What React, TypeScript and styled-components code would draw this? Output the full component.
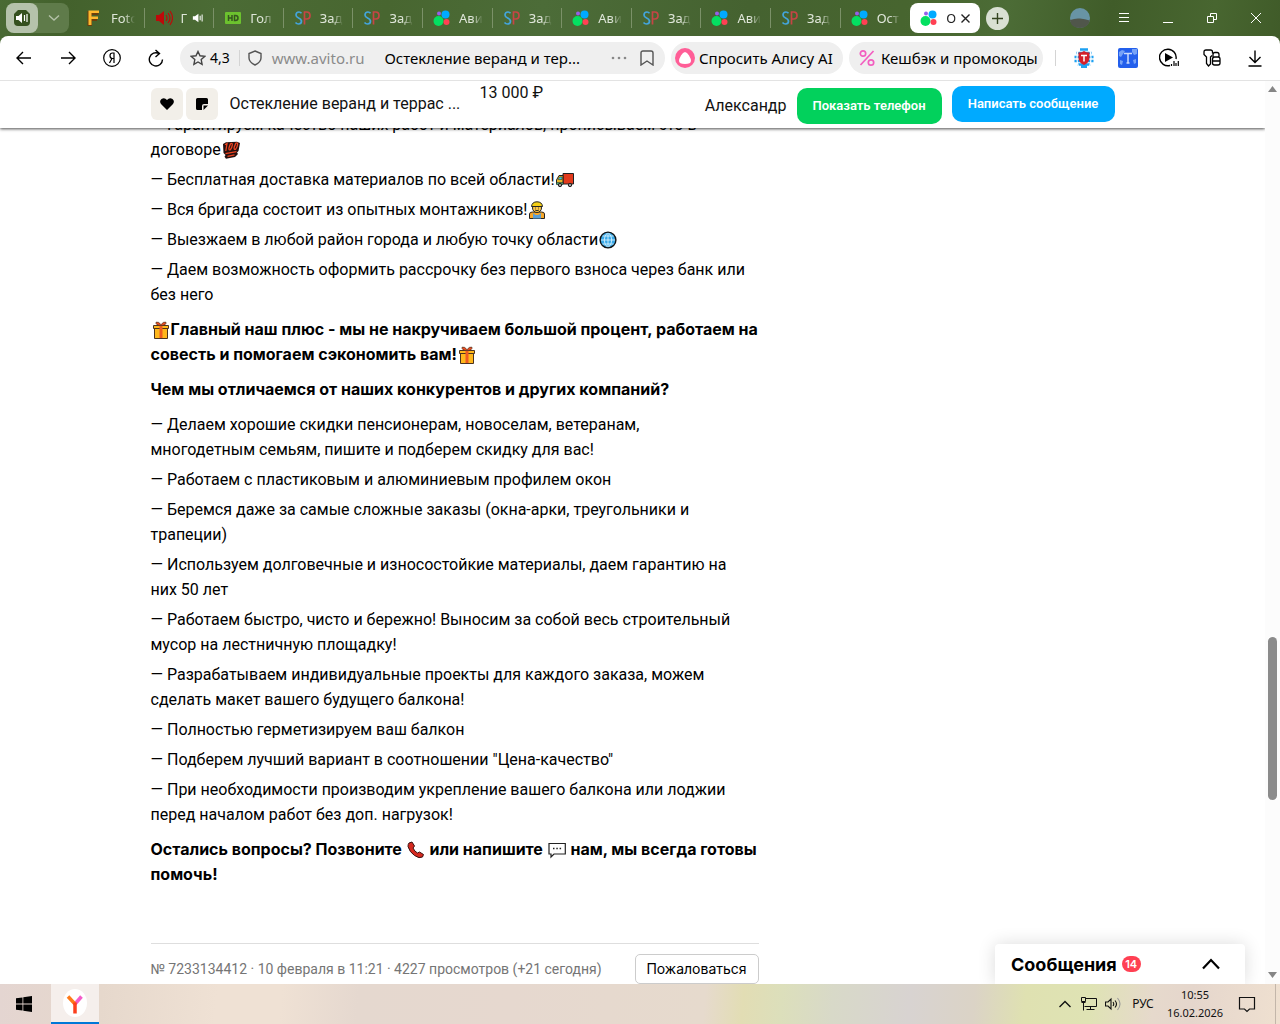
import React from 'react';
import styled, { createGlobalStyle } from 'styled-components';

const GlobalStyle = createGlobalStyle`
  * { box-sizing: border-box; }
  body { margin: 0; background: #fff; color: #000; font-family: Inter, "Noto Sans", sans-serif; overflow: hidden; }
  button, input { font: inherit; color: inherit; }
  svg { display: block; flex: none; }
`;

const Shell = styled.div`
  display: flex;
  flex-direction: column;
  height: 100vh;
`;

/* ---------- browser chrome ---------- */

const Chrome = styled.header`
  flex: none;
  font-family: "Noto Sans", sans-serif;
  background: linear-gradient(100deg, #4a6a34 0%, #43612c 5%, #4b6b35 17%, #486630 30%, #4c6c38 42%, #456230 58%, #47652f 70%, #4c6c36 78%, #405c29 86%, #486630 94%, #3f5a28 100%);
`;

const TabStrip = styled.div`
  display: flex;
  height: 36px;
`;

const IconButton = styled.button<{ $w?: number; $h?: number }>`
  display: flex;
  align-items: center;
  justify-content: center;
  flex: none;
  width: ${p => p.$w ?? 44}px;
  height: ${p => p.$h ?? 32}px;
  padding: 0;
  border: 0;
  background: none;
`;

const SoundGroup = styled.div`
  display: flex;
  flex: none;
  width: 63px;
  height: 30px;
  margin: 3px 6px;
  border-radius: 8px;
  background: #5f7b4a;
`;

const SoundButton = styled(IconButton)`
  border-radius: 8px;
  background: #b5c2ab;
`;

const Tabs = styled.nav`
  display: flex;
  flex: 1;
  min-width: 0;
`;

const Tab = styled.button<{ $active?: boolean; $last?: boolean }>`
  display: flex;
  align-items: center;
  flex: 1 1 0;
  min-width: 0;
  height: 30px;
  margin: 3px 0;
  padding: 0 10px;
  border: 0;
  border-radius: ${p => (p.$active ? '8px' : '0')};
  background: ${p => (p.$active ? '#fff' : 'none')};
  color: ${p => (p.$active ? '#222' : '#dfe6d9')};
  font-size: 13px;
  line-height: 20px;
  background-image: ${p => (p.$active || p.$last ? 'none' : 'linear-gradient(#7b9168, #7b9168)')};
  background-size: 1px 20px;
  background-position: right center;
  background-repeat: no-repeat;
`;

const TabTitle = styled.span`
  flex: 1;
  min-width: 0;
  margin-left: 8px;
  overflow: hidden;
  white-space: nowrap;
  text-align: left;
  mask-image: linear-gradient(90deg, #000 55%, transparent);
`;

const WindowControls = styled.div`
  display: flex;
  align-items: center;
  justify-content: flex-end;
  flex: none;
  width: 300px;
  padding-right: 2px;
`;

const NewTab = styled(IconButton)`
  margin: 0 auto 0 6px;
  border-radius: 50%;
  background: #d9e0d3;
`;

const Toolbar = styled.div`
  display: flex;
  align-items: center;
  height: 45px;
  padding-left: 2px;
  border-bottom: 1px solid #e3e3e3;
  border-radius: 8px 8px 0 0;
  background: #fff;
`;

const Pill = styled.div`
  display: flex;
  align-items: center;
  height: 32px;
  border-radius: 16px;
  background: #efefef;
  font-size: 15px;
  line-height: 24px;
  white-space: nowrap;
`;

const Omnibox = styled(Pill)`
  flex: 1;
  min-width: 0;
  margin-left: 2px;
  padding: 0 6px 0 10px;
`;

const Rating = styled.span`
  margin: 0 9px 0 4px;
  font-size: 14px;
`;

const Rule = styled.span`
  flex: none;
  width: 1px;
  height: 16px;
  background: #d4d4d4;
`;

const Shield = styled.span`
  margin: 0 10px 0 8px;
`;

const Host = styled.span`
  color: #8b8b8b;
`;

const PageName = styled.span`
  flex: 1;
  min-width: 0;
  margin-left: 20px;
  overflow: hidden;
  text-overflow: ellipsis;
`;

const PillButton = styled(Pill).attrs({ as: 'button' })<{ $w: number }>`
  flex: none;
  width: ${p => p.$w}px;
  margin-left: 6px;
  padding: 0 4px;
  gap: 4px;
  border: 0;
`;

const Extensions = styled.div`
  display: flex;
  align-items: center;
  flex: none;
  margin-left: 12px;
`;

/* ---------- page ---------- */

const Viewport = styled.div`
  display: flex;
  flex: 1;
  min-height: 0;
`;

const Page = styled.div`
  position: relative;
  display: flex;
  flex-direction: column;
  flex: 1;
  min-width: 0;
  overflow: hidden;
  font-family: Roboto, "Noto Sans", sans-serif;
`;

const StickyBar = styled.div`
  position: relative;
  z-index: 1;
  flex: none;
  height: 47px;
  padding: 5px 20px 2px;
  background: #fff;
  box-shadow: 0 1px 3px rgba(0, 0, 0, 0.7);
`;

const Container = styled.div`
  width: 100%;
  max-width: 964px;
  margin: 0 auto;
`;

const BarRow = styled(Container)`
  display: flex;
  align-items: center;
  height: 40px;
  font-size: 16px;
  line-height: 24px;
  white-space: nowrap;
  color: #111;
`;

const BarItem = styled.div`
  display: flex;
  align-items: center;
  align-self: flex-start;
  height: 36px;
  gap: 3px;
`;

const Soft = styled(IconButton)`
  border-radius: 6px;
  background: #f2efe9;
`;

const BarTitle = styled.span`
  width: 238px;
  margin: 0 12px 0 9px;
`;

const Price = styled.span`
  flex: 1;
  align-self: flex-start;
  line-height: 14px;
`;

const Action = styled.button<{ $color: string; $w: number; $top?: boolean }>`
  flex: none;
  align-self: ${p => (p.$top ? 'flex-start' : 'center')};
  width: ${p => p.$w}px;
  height: 36px;
  margin-left: 10px;
  padding: 0;
  border: 0;
  border-radius: 10px;
  background: ${p => p.$color};
  color: #fff;
  font-size: 13px;
  font-weight: 600;
`;

const Scroll = styled.main`
  flex: 1;
  min-height: 0;
  padding: 0 20px;
  overflow: hidden;
`;

const Column = styled(Container)`
  margin-top: -16px;
`;

const Description = styled.article`
  display: flex;
  flex-direction: column;
  gap: 10px;
  width: 608px;
  padding-bottom: 56px;
  border-bottom: 1px solid #dedede;
  font-size: 16px;
  line-height: 25px;
  white-space: nowrap;
`;

const List = styled.ul`
  display: flex;
  flex-direction: column;
  gap: 5px;
  margin: 0;
  padding: 0;
  list-style: none;
`;

const Strong = styled.p`
  margin: 0;
  font-family: Inter, "Noto Sans", sans-serif;
  font-weight: 700;
`;

const Emoji = styled.svg.attrs({ viewBox: '0 0 18 18', width: 18, height: 18 })`
  display: inline-block;
  margin: 0 1px;
  vertical-align: -4px;
`;

const Meta = styled.footer`
  display: flex;
  align-items: center;
  justify-content: space-between;
  width: 608px;
  padding-top: 10px;
  color: #757575;
  font-size: 14px;
  line-height: 20px;
  white-space: nowrap;
`;

const Report = styled.button`
  width: 124px;
  height: 30px;
  padding: 0;
  border: 1px solid #ccc;
  border-radius: 5px;
  background: #fff;
  color: #000;
  font-family: Inter, "Noto Sans", sans-serif;
`;

const Messenger = styled.button`
  position: absolute;
  right: 20px;
  bottom: 0;
  display: flex;
  align-items: center;
  width: 250px;
  height: 40px;
  padding: 0 24px 0 16px;
  border: 0;
  border-radius: 4px 4px 0 0;
  background: #fff;
  box-shadow: 0 0 18px rgba(0, 0, 0, 0.14);
  font-family: Inter, "Noto Sans", sans-serif;
  font-size: 18px;
  font-weight: 700;
`;

const Badge = styled.span`
  width: 19px;
  height: 16px;
  margin: 0 auto 0 5px;
  border-radius: 8px;
  background: #ff4053;
  color: #fff;
  font-size: 11px;
  font-weight: 600;
  line-height: 16px;
`;

const Scrollbar = styled.div`
  display: flex;
  flex-direction: column;
  align-items: center;
  justify-content: space-between;
  flex: none;
  width: 15px;
  padding: 5px 0 6px;
  background: #fcfcfc;
`;

const Track = styled.div`
  display: flex;
  flex-direction: column;
  flex: 1;
  width: 9px;
`;

const Before = styled.div`
  flex: 545;
`;

const Thumb = styled.div`
  flex: 163;
  border-radius: 5px;
  background: #8b8b8b;
`;

const After = styled.div`
  flex: 172;
`;

/* ---------- taskbar ---------- */

const Taskbar = styled.footer`
  display: flex;
  align-items: center;
  flex: none;
  height: 40px;
  color: #111;
  font-family: "Noto Sans", sans-serif;
  font-size: 12px;
  line-height: 18px;
  background: linear-gradient(95deg, #e4d5d1 0%, #e6d8cc 8%, #efe1d4 17%, #efe1d4 22%, #e5d8cf 28%, #e6d8cf 40%, #e6dacd 55%, #e2ddb4 58%, #dcdfbb 61%, #d8d9c8 65%, #d8d3d1 71%, #dbd3c6 76%, #dfe1b1 80%, #dfe3b4 85%, #e6d9cc 90%, #e5d6cc 93%, #efe0d0 100%);
`;

const TaskButton = styled(IconButton)<{ $active?: boolean }>`
  background: ${p => (p.$active ? '#f5efec' : 'none')};
  border-bottom: ${p => (p.$active ? '2px solid #0078d7' : '0')};
`;

const StartButton = styled(TaskButton)`
  margin-right: 3px;
`;

const Tray = styled.div`
  display: flex;
  align-items: center;
  margin-left: auto;
`;

const Clock = styled.time`
  width: 68px;
  font-size: 11px;
  text-align: center;
`;

const Edge = styled.span`
  width: 1px;
  height: 40px;
  margin: 0 4px 0 10px;
  background: #c3b6aa;
`;

/* ---------- drawings ---------- */

const line = { fill: 'none', stroke: 'currentColor', strokeWidth: 1.4 } as const;

type Site = 'f' | 'sound' | 'hd' | 'sp' | 'avito';

const Favicon = ({ kind }: { kind: Site }) => {
  switch (kind) {
    case 'f':
      return (
        <svg width="18" height="18" viewBox="0 0 18 18">
          <path d="M2.500 2h11v4H7v2.500h5V12H7v5H2.500z" fill="#6b3d0c" />
          <path d="M3.500 1.500H14V4H6.500v3.500H13V10H6.500v6h-3z" fill="#ffb92e" />
        </svg>
      );
    case 'sound':
      return (
        <svg width="18" height="18" viewBox="0 0 18 18">
          <path d="M1 6h3l5-4v14l-5-4H1z" fill="#bd0a0a" />
          <path d="M11 6q2 3 0 6M13 4q4 5 0 10M15 2q5 7 0 14" fill="none" stroke="#bd0a0a" strokeWidth="1.200" />
        </svg>
      );
    case 'hd':
      return (
        <svg width="18" height="18" viewBox="0 0 18 18">
          <rect x="1" y="3" width="16" height="12" rx="1" fill="#6cc22e" />
          <path d="M4.500 6v6M8 6v6M4.500 9H8M10.500 6.500v5h1q2.500 0 2.500-2.500t-2.500-2.500z" fill="none" stroke="#35561f" strokeWidth="1.500" />
        </svg>
      );
    case 'sp':
      return (
        <svg width="18" height="18" viewBox="0 0 18 18" fill="none" strokeWidth="1.700">
          <path d="M7.500 4.200Q6.500 3 5 3 2 3 2 6q0 1.800 2.600 3T7.500 12q0 3-3 3-1.800 0-3-1.500" stroke="#43a5dc" />
          <path d="M10.500 15.500V3h2.200q3.300 0 3.300 3.500T12.700 10h-2" stroke="#c64545" />
        </svg>
      );
    default:
      return (
        <svg width="18" height="18" viewBox="0 0 18 18">
          <circle cx="5.500" cy="12" r="5" fill="#04e061" />
          <circle cx="12.500" cy="5.500" r="4" fill="#00aaff" />
          <circle cx="13.500" cy="13" r="3" fill="#ff4053" />
          <circle cx="6" cy="4.500" r="2" fill="#965eeb" />
        </svg>
      );
  }
};

const Speaker = ({ size = 14 }: { size?: number }) => (
  <svg width={size} height={size} viewBox="0 0 14 14">
    <path d="M1 5h2.500L7.500 2v10L3.500 9H1z" fill="#fff" />
    <path d="M9.500 4.500v5M11.800 3v8" stroke="#fff" strokeWidth="1.200" />
  </svg>
);

const Hundred = () => (
  <Emoji>
    <path d="M1 3l3-1.800L15 .8 18 2l-1.500 8-1.500 1.500 1 1.500-3 3-9 1.800-1.500-2L3.500 14 1.500 12z" fill="#241010" />
    <path d="M3 3.800L5 2.500 3.800 10M8.500 2.800q2-1.300 1.800 1.200T8.300 8.800q-1.800.5-1.300-2zM13.800 2.300q2-1.300 1.800 1.200T13.500 8.300q-1.800.5-1.300-2z" fill="none" stroke="#ee4420" strokeWidth="1.300" />
    <path d="M3.500 12.700l11-2M5.500 15.400l7-1.500" stroke="#ee4420" strokeWidth="1.300" />
  </Emoji>
);

const Truck = () => (
  <Emoji stroke="#222">
    <path d="M7 2.500h10.500v10.500H7z" fill="#e23a1c" />
    <path d="M.5 13V9L3 4.500h4V13z" fill="#e8b62a" />
    <path d="M2.200 8.500L3.500 6H6v2.500z" fill="#3fd0e0" strokeWidth=".5" />
    <path d="M.5 11.500h6.500v2H.5z" fill="#4bb07a" strokeWidth=".5" />
    <circle cx="4" cy="14" r="1.700" fill="#999" />
    <circle cx="14" cy="14" r="1.700" fill="#999" />
  </Emoji>
);

const Worker = () => (
  <Emoji stroke="#222">
    <path d="M1.500 17.500V13q0-2 3-2h9q3 0 3 2v4.500z" fill="#f6a629" />
    <path d="M5 17.500V12l2.500 2h3l2.500-2v5.500z" fill="#5b9fd6" stroke="none" />
    <circle cx="9" cy="7" r="4.500" fill="#fbc546" />
    <path d="M3.500 5.500Q4 .8 9 .8t5.500 4.700z" fill="#f4cf14" />
    <path d="M7 9q2 1.300 4 0M7 7h.8M10.200 7h.8" fill="none" strokeWidth=".9" />
  </Emoji>
);

const Globe = () => (
  <Emoji stroke="#111" fill="none">
    <circle cx="9" cy="9" r="7.900" fill="#3aa9e8" strokeWidth="1.400" />
    <path d="M2 9h14M3.500 5h11M3.500 13h11M9 2v14M8 2.200q-5.500 6.800 0 13.600M10 2.200q5.500 6.800 0 13.600" stroke="#e5f7ff" strokeWidth=".8" />
  </Emoji>
);

const Gift = () => (
  <Emoji stroke="#4b3320">
    <path d="M2.500 7h13v10.500h-13z" fill="#ffb71c" />
    <path d="M1.500 4.500h15v3h-15z" fill="#ffb71c" />
    <path d="M7.500 4.500h3V17h-3z" fill="#ee5b22" stroke="none" />
    <path d="M9 4.500Q3.500 4.500 4 1.200q3-1 5 2.600 2-3.600 5-2.600.5 3.300-5 3.300z" fill="#ee4c22" strokeWidth=".7" />
  </Emoji>
);

const Phone = () => (
  <Emoji>
    <path d="M2 2l3-1 2.500 4-1.500 2q1.500 3.500 4.500 5l2-1 4 2.500-1 2.500q-3 2-8-1.500T1 5.500Q1 3 2 2z" fill="#d5291f" stroke="#3b1111" />
  </Emoji>
);

const Speech = () => (
  <Emoji>
    <path d="M1 2.500h16.300v10.500H6l-3 3v-3H1z" fill="#fff" stroke="#222" strokeWidth="1.200" />
    <path d="M5 7.500h1.500M8.300 7.500h1.500M11.600 7.500h1.500" stroke="#222" strokeWidth="1.500" />
  </Emoji>
);

const TriangleMark = ({ down }: { down?: boolean }) => (
  <svg width="9" height="6" viewBox="0 0 9 6">
    <path d={down ? 'M0 0h9L4.500 6z' : 'M0 6h9L4.500 0z'} fill="#858585" />
  </svg>
);

/* ---------- content ---------- */

const tabs: { kind: Site; title: string; playing?: boolean }[] = [
  { kind: 'f', title: 'Foto' },
  { kind: 'sound', title: 'Г', playing: true },
  { kind: 'hd', title: 'Гол' },
  { kind: 'sp', title: 'Зад' },
  { kind: 'sp', title: 'Зад' },
  { kind: 'avito', title: 'Ави' },
  { kind: 'sp', title: 'Зад' },
  { kind: 'avito', title: 'Ави' },
  { kind: 'sp', title: 'Зад' },
  { kind: 'avito', title: 'Ави' },
  { kind: 'sp', title: 'Зад' },
  { kind: 'avito', title: 'Ост' },
];

const differences: string[][] = [
  ['— Делаем хорошие скидки пенсионерам, новоселам, ветеранам,', 'многодетным семьям, пишите и подберем скидку для вас!'],
  ['— Работаем с пластиковым и алюминиевым профилем окон'],
  ['— Беремся даже за самые сложные заказы (окна-арки, треугольники и', 'трапеции)'],
  ['— Используем долговечные и износостойкие материалы, даем гарантию на', 'них 50 лет'],
  ['— Работаем быстро, чисто и бережно! Выносим за собой весь строительный', 'мусор на лестничную площадку!'],
  ['— Разрабатываем индивидуальные проекты для каждого заказа, можем', 'сделать макет вашего будущего балкона!'],
  ['— Полностью герметизируем ваш балкон'],
  ['— Подберем лучший вариант в соотношении "Цена-качество"'],
  ['— При необходимости производим укрепление вашего балкона или лоджии', 'перед началом работ без доп. нагрузок!'],
];

const BrowserTabs = () => (
  <TabStrip>
    <SoundGroup>
      <SoundButton $w={32} $h={30} aria-label="Звук">
        <svg width="18" height="18" viewBox="0 0 18 18">
          <path d="M5 1h8l4 4v8q0 4-4 4H5q-4 0-4-4V5z" fill="#35511f" />
          <path d="M3 7h2.500L9 4v10l-3.500-3H3z" fill="#fff" />
          <path d="M11.500 6v6M14 5v8" stroke="#fff" strokeWidth="1.200" />
        </svg>
      </SoundButton>
      <IconButton $w={31} $h={30} aria-label="Список вкладок">
        <svg width="12" height="8" viewBox="0 0 12 8" color="#b4c2a8"><path d="M1 1.500l5 4.500 5-4.500" {...line} /></svg>
      </IconButton>
    </SoundGroup>
    <Tabs>
      {tabs.map((t, i) => (
        <Tab key={i} $last={i === tabs.length - 1}>
          <Favicon kind={t.kind} />
          <TabTitle>{t.title}</TabTitle>
          {t.playing && <Speaker size={12} />}
        </Tab>
      ))}
      <Tab $active>
        <Favicon kind="avito" />
        <TabTitle>О</TabTitle>
        <svg width="9" height="9" viewBox="0 0 9 9"><path d="M.5.5l8 8M8.500.5l-8 8" {...line} /></svg>
      </Tab>
    </Tabs>
    <WindowControls>
      <NewTab $w={23} $h={23} aria-label="Новая вкладка">
        <svg width="13" height="13" viewBox="0 0 13 13" color="#34441f"><path d="M6.500 1v11M1 6.500h11" {...line} /></svg>
      </NewTab>
      <IconButton aria-label="Профиль">
        <svg width="20" height="20" viewBox="0 0 20 20">
          <circle cx="10" cy="10" r="10" fill="#6894a5" />
          <path d="M0 12q5-2 10-1.500t9.800 2Q18 20 10 20 1 20 0 12z" fill="#50564b" />
        </svg>
      </IconButton>
      <IconButton aria-label="Меню">
        <svg width="10" height="10" viewBox="0 0 10 10"><path d="M0 .5h10M0 4.500h10M0 8.500h10" stroke="#fff" /></svg>
      </IconButton>
      <IconButton aria-label="Свернуть">
        <svg width="10" height="10" viewBox="0 0 10 10"><path d="M0 9.500h10" stroke="#fff" /></svg>
      </IconButton>
      <IconButton aria-label="Развернуть">
        <svg width="10" height="10" viewBox="0 0 10 10"><path d="M.5 3.500h6v6h-6zM3.500 3.500v-3h6v6h-3" fill="none" stroke="#fff" /></svg>
      </IconButton>
      <IconButton aria-label="Закрыть">
        <svg width="10" height="10" viewBox="0 0 10 10"><path d="M0 0l10 10M10 0L0 10" stroke="#fff" /></svg>
      </IconButton>
    </WindowControls>
  </TabStrip>
);

const AddressBar = () => (
  <Toolbar>
    <IconButton aria-label="Назад">
      <svg width="16" height="14" viewBox="0 0 16 14"><path d="M15 7H1.500M7 1L1 7l6 6" {...line} /></svg>
    </IconButton>
    <IconButton aria-label="Вперёд">
      <svg width="16" height="14" viewBox="0 0 16 14"><path d="M1 7h13.500M9 1l6 6-6 6" {...line} /></svg>
    </IconButton>
    <IconButton aria-label="Яндекс">
      <svg width="18" height="18" viewBox="0 0 18 18" {...line} strokeWidth="1.200">
        <circle cx="9" cy="9" r="8.300" />
        <path d="M11 14V4H9.500Q7 4 7 6.700T9.500 9.500H11M9 9.500L6.500 14" />
      </svg>
    </IconButton>
    <IconButton aria-label="Обновить">
      <svg width="16" height="18" viewBox="0 0 16 18"><path d="M14.500 10.500A6.600 6.600 0 1 1 11 4.500M7.500 1l4 3.500-4 3.500" {...line} /></svg>
    </IconButton>
    <Omnibox>
      <svg width="16" height="16" viewBox="0 0 16 16" color="#444"><path d="M8 1.500l2 4.300 4.700.6-3.500 3.200.9 4.700L8 12l-4.100 2.300.9-4.700L1.300 6.400 6 5.800z" {...line} /></svg>
      <Rating>4,3</Rating>
      <Rule />
      <Shield>
        <svg width="14" height="16" viewBox="0 0 14 16" color="#555"><path d="M7 1l6 2.500V8q0 4-6 7-6-3-6-7V3.500z" {...line} /></svg>
      </Shield>
      <Host>www.avito.ru</Host>
      <PageName>Остекление веранд и тер...</PageName>
      <IconButton $w={32} aria-label="Ещё">
        <svg width="16" height="4" viewBox="0 0 16 4" fill="#888"><circle cx="2" cy="2" r="1.300" /><circle cx="8" cy="2" r="1.300" /><circle cx="14" cy="2" r="1.300" /></svg>
      </IconButton>
      <IconButton $w={24} aria-label="Закладка">
        <svg width="14" height="16" viewBox="0 0 14 16" color="#555"><path d="M1 3q0-2 2-2h8q2 0 2 2v12l-6-4-6 4z" {...line} /></svg>
      </IconButton>
    </Omnibox>
    <PillButton $w={172}>
      <svg width="20" height="20" viewBox="0 0 20 20">
        <circle cx="10" cy="10" r="10" fill="#ff5e97" />
        <path d="M10 4q2 0 4 3.500t2 5.200Q16 16 10 16t-6-3.300q0-1.700 2-5.200T10 4z" fill="#fff" />
      </svg>
      Спросить Алису AI
    </PillButton>
    <PillButton $w={194}>
      <svg width="24" height="20" viewBox="0 0 24 20" fill="none" stroke="#f25fc0" strokeWidth="1.700">
        <circle cx="10" cy="5.500" r="2.700" /><circle cx="18" cy="14.500" r="2.700" /><path d="M20.500 3L7.500 17" />
      </svg>
      Кешбэк и промокоды
    </PillButton>
    <Extensions>
      <Rule />
      <IconButton $w={56} aria-label="Блокировщик">
        <svg width="20" height="20" viewBox="0 0 20 20">
          <path d="M6 1.500h8M2.500 5h15M.5 9h19M.5 13h19M3.500 16.500h13M7 19h6" stroke="#1da1f2" strokeWidth="2.600" />
          <path d="M4.500 1q-3 9 0 18M15.500 1q3 9 0 18" fill="none" stroke="#fff" strokeWidth="1.200" />
          <path d="M4.500 4.500Q8 4.500 10 3q2 1.500 5.500 1.500V10q0 4.500-5.500 7-5.500-2.500-5.500-7z" fill="#d3202b" />
          <path d="M7 7.500h6M10 7.500v6" stroke="#fff" strokeWidth="1.500" />
        </svg>
      </IconButton>
      <IconButton $w={32} aria-label="Переводчик">
        <svg width="20" height="20" viewBox="0 0 20 20">
          <rect width="20" height="20" rx="2" fill="#235fec" />
          <path d="M1 4l3-2 3 1-2 3-2 3-2-1zM14 1h5v5l-3 1-2-3zM2 12l3 1-1 4-2-1zM15 12l3-1v4l-2 1z" fill="#76a2f7" />
          <path d="M6 5.500h8M10 5.500V15M8.500 15h3" stroke="#c9dafc" strokeWidth="1.500" />
        </svg>
      </IconButton>
      <IconButton $w={50} aria-label="Плеер">
        <svg width="20" height="20" viewBox="0 0 20 20">
          <path d="M11 17.500A8.300 8.300 0 1 1 17 11" {...line} />
          <path d="M6 5l8 4.500L6 14z" fill="#000" />
          <path d="M12.500 18v-2M15 18v-5M17 18v-3M19.300 18v-5" stroke="#000" strokeWidth="1.200" />
        </svg>
      </IconButton>
      <IconButton $w={36} aria-label="Пароли">
        <svg width="18" height="18" viewBox="0 0 18 18" {...line} strokeWidth="1.300">
          <path d="M9.500 4.500V3Q9.500 1 7.500 1H3Q1 1 1 3v2.500L3.500 8v6.500L5.500 17l2-2V8L9 6.500" />
          <path d="M10 8V5.500q0-2 2-2h2q2 0 2 2V8M9.500 10.500q0-2.500 2-2.500h3.500q2 0 2 2v4q0 2-2 2h-3.500q-2 0-2-2zM9.500 12H17" />
        </svg>
      </IconButton>
      <IconButton $w={50} aria-label="Загрузки">
        <svg width="14" height="18" viewBox="0 0 14 18"><path d="M7 1.500v12M1.500 8L7 13.500 12.500 8M.5 17h13" {...line} /></svg>
      </IconButton>
    </Extensions>
  </Toolbar>
);

export default function App() {
  return (
    <Shell>
      <GlobalStyle />
      <Chrome>
        <BrowserTabs />
        <AddressBar />
      </Chrome>
      <Viewport>
        <Page>
          <StickyBar>
            <BarRow>
              <BarItem>
                <Soft $w={32} aria-label="В избранное">
                  <svg width="14" height="12" viewBox="0 0 14 12"><path d="M7 12L1 6Q-1 3 1.500 1 4.500-1 7 2q2.500-3 5.500-1Q15 3 13 6z" /></svg>
                </Soft>
                <Soft $w={32} aria-label="Заметка">
                  <svg width="12" height="12" viewBox="0 0 12 12"><path d="M1.500 0h9Q12 0 12 1.500V6H8Q6 6 6 8v4H1.500Q0 12 0 10.500v-9Q0 0 1.500 0zM7.500 7.500H12l-4.500 4.500z" /></svg>
                </Soft>
                <BarTitle>Остекление веранд и террас ...</BarTitle>
              </BarItem>
              <Price>13 000 ₽</Price>
              <span>Александр</span>
              <Action $color="#02d15c" $w={145}>Показать телефон</Action>
              <Action $color="#00aaff" $w={163} $top>Написать сообщение</Action>
            </BarRow>
          </StickyBar>
          <Scroll>
            <Column>
              <Description>
                <List>
                  <li>— Гарантируем качество наших работ и материалов, прописываем это в<br />договоре<Hundred /></li>
                  <li>— Бесплатная доставка материалов по всей области!<Truck /></li>
                  <li>— Вся бригада состоит из опытных монтажников!<Worker /></li>
                  <li>— Выезжаем в любой район города и любую точку области<Globe /></li>
                  <li>— Даем возможность оформить рассрочку без первого взноса через банк или<br />без него</li>
                </List>
                <Strong><Gift />Главный наш плюс - мы не накручиваем большой процент, работаем на<br />совесть и помогаем сэкономить вам!<Gift /></Strong>
                <Strong>Чем мы отличаемся от наших конкурентов и других компаний?</Strong>
                <List>
                  {differences.map(([first, second]) => (
                    <li key={first}>{first}{second && <><br />{second}</>}</li>
                  ))}
                </List>
                <Strong>Остались вопросы? Позвоните <Phone /> или напишите <Speech /> нам, мы всегда готовы<br />помочь!</Strong>
              </Description>
              <Meta>
                <span>№ 7233134412 · 10 февраля в 11:21 · 4227 просмотров (+21 сегодня)</span>
                <Report>Пожаловаться</Report>
              </Meta>
            </Column>
          </Scroll>
          <Messenger>
            Сообщения
            <Badge>14</Badge>
            <svg width="20" height="12" viewBox="0 0 20 12"><path d="M2 10.500L10 2l8 8.500" {...line} strokeWidth="2.200" /></svg>
          </Messenger>
        </Page>
        <Scrollbar>
          <TriangleMark />
          <Track><Before /><Thumb /><After /></Track>
          <TriangleMark down />
        </Scrollbar>
      </Viewport>
      <Taskbar>
        <StartButton $w={48} $h={40} aria-label="Пуск">
          <svg width="16" height="16" viewBox="0 0 16 16"><path d="M0 2.300L6.500 1.400v6.100H0zM7.300 1.300L16 0v7.500H7.300zM0 8.400h6.500v6.200L0 13.700zM7.300 8.400H16V16l-8.700-1.300z" /></svg>
        </StartButton>
        <TaskButton $w={48} $h={40} $active aria-label="Яндекс Браузер">
          <svg width="24" height="28" viewBox="0 0 24 28" fill="none" strokeWidth="3.500">
            <ellipse cx="12" cy="14" rx="12" ry="14" fill="#fff" />
            <path d="M18.500 7.500L12 15" stroke="#f45cc9" />
            <path d="M5 7.500l7 7.500" stroke="#ff7a1a" />
            <path d="M12 13.500v11" stroke="#fc3f1d" />
          </svg>
        </TaskButton>
        <Tray>
          <IconButton $w={24} aria-label="Скрытые значки">
            <svg width="12" height="8" viewBox="0 0 12 8"><path d="M.5 7L6 1.500 11.500 7" {...line} /></svg>
          </IconButton>
          <IconButton $w={24} aria-label="Сеть">
            <svg width="16" height="14" viewBox="0 0 16 14" {...line} strokeWidth="1">
              <path d="M4.500 1.500h11v8h-12M.5.5h4v4h-4zM2.500 4.500v9M9.500 9.500v3M5.500 12.500h8M.5 5.500h4" />
            </svg>
          </IconButton>
          <IconButton $w={24} aria-label="Громкость">
            <svg width="16" height="14" viewBox="0 0 16 14" {...line} strokeWidth="1.100">
              <path d="M.5 5H3l3-3v10L3 9H.5zM8 5q1.500 2 0 4M10 3.500q3 3.500 0 7" />
              <path d="M12.500 1q5 6 0 12" stroke="#999" />
            </svg>
          </IconButton>
          <IconButton $w={36}>РУС</IconButton>
          <Clock>10:55<br />16.02.2026</Clock>
          <IconButton $w={36} aria-label="Уведомления">
            <svg width="18" height="18" viewBox="0 0 18 18"><path d="M1.500 2.500h15v11.500h-5L9 16.500 6.500 14h-5z" {...line} strokeWidth="1.200" /></svg>
          </IconButton>
          <Edge />
        </Tray>
      </Taskbar>
    </Shell>
  );
}
